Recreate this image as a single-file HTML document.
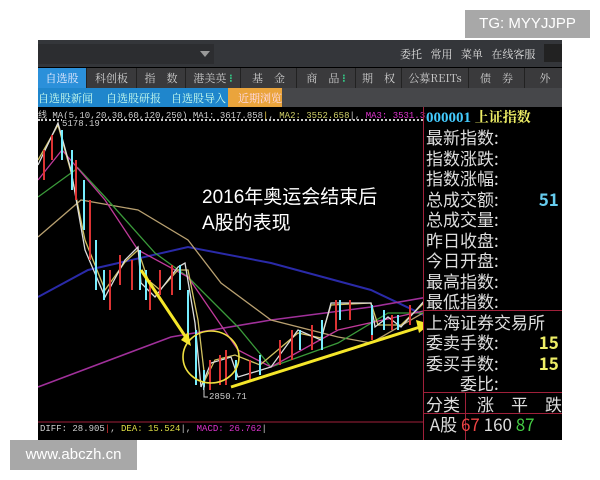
<!DOCTYPE html><html><head><meta charset="utf-8"><style>
body{margin:0;width:600px;height:480px;background:#fff;position:relative;overflow:hidden;font-family:"Liberation Sans","Noto Sans CJK SC",sans-serif}
.a{position:absolute}
.img{left:38px;top:40px;width:524px;height:400px;background:#000;overflow:hidden}
.top{left:0;top:0;width:524px;height:27px;background:#34363a}
.tabs{left:0;top:28px;width:524px;height:20px;background:#3a3a3c;font-size:11px;color:#ccc;font-family:"Noto Serif CJK SC",serif}
.tabs span{position:absolute;top:0;height:20px;line-height:20px;text-align:center;border-right:1px solid #222}
.sub{left:0;top:48px;width:524px;height:19px;background:#46474a;font-size:11px;color:#cfe;font-family:"Noto Serif CJK SC",serif}
.rp{font-family:"Noto Sans CJK SC",sans-serif;font-size:17px;color:#ddd;left:388px;line-height:20.5px}
</style></head><body>
<div class="a img">
<div class="a top"><div class="a" style="left:0;top:4px;width:176px;height:20px;background:#2c2d30"></div>
<div class="a" style="left:162px;top:11px;border:5px solid transparent;border-top:6px solid #999"></div>
<div class="a" style="left:362px;top:6px;font-size:11px;color:#ddd;font-family:'Noto Serif CJK SC',serif;white-space:nowrap">委托 &nbsp;&nbsp;常用 &nbsp;&nbsp;菜单 &nbsp;&nbsp;在线客服</div>
<div class="a" style="left:506px;top:4px;width:18px;height:18px;background:#222"></div></div>
<div class="a tabs">
<span style="left:0;width:48px;background:#2b90da;color:#eef">自选股</span>
<span style="left:49px;width:49px">科创板</span><span style="left:99px;width:48px">指　数</span>
<span style="left:148px;width:54px">港美英 <b style="color:#3c8">⁝</b></span><span style="left:203px;width:55px">基　金</span>
<span style="left:259px;width:58px">商　品 <b style="color:#3c8">⁝</b></span><span style="left:318px;width:45px">期　权</span>
<span style="left:364px;width:66px">公募REITs</span><span style="left:431px;width:55px">债　券</span><span style="left:487px;width:40px">外</span></div>
<div class="a sub"><div class="a" style="left:0;top:0;width:190px;height:19px;background:#1f86cc"></div>
<div class="a" style="left:190px;top:0;width:54px;height:19px;background:#eaa43c"></div>
<span class="a" style="left:0;top:2px">自选股新闻</span><span class="a" style="left:68px;top:2px">自选股研报</span><span class="a" style="left:133px;top:2px">自选股导入</span><span class="a" style="left:200px;top:2px;color:#fde">近期浏览</span></div>
<div class="a" style="left:0;top:68px;font-size:9px;font-family:'Liberation Mono',monospace;white-space:nowrap;color:#ccc">线 MA(5,10,20,30,60,120,250) MA1: 3617.858<span style="color:#ec4">|</span>, <span style="color:#cc6">MA2: 3552.658</span>|, <span style="color:#d3c">MA3: 3531.316</span>|, <span style="color:#3c3">MA4</span></div>
<div class="a" style="left:0;top:79px;width:385px;border-top:2px dotted #ccc"></div>
<div class="a" style="left:24px;top:79px;font-size:9px;color:#ccc;font-family:'Liberation Mono',monospace;background:#000">5178.19</div>
<svg class="a" style="left:0;top:0" width="386" height="400" viewBox="38 40 386 400">
<g fill="none" stroke-width="1.3">
<polyline stroke="#2a2aa8" stroke-width="2" points="38,297 88,270 188,247 271,263 371,290 428,317"/>
<polyline stroke="#a0309a" stroke-width="1.6" points="38,387 171,337 271,320 371,307 428,297"/>
<polyline stroke="#b8a070" points="38,237 81,200 138,210 188,240 221,283 271,320 338,337 371,343 428,310"/>
<polyline stroke="#3a9a3a" points="38,197 78,168 105,197 155,253 188,277 238,327 271,367 338,343 388,313 428,313"/>
<polyline stroke="#c03a9a" points="38,180 62,150 105,200 138,250 188,277 238,350 271,367 338,330 428,310"/>
<polyline stroke="#d0c060" points="38,160 58,125 71,172 85,240 105,290 125,262 138,250 148,280 160,290 178,270 188,270 198,320 205,380 215,360 235,355 260,365 298,333 321,338 331,305 371,303 378,325 401,325 425,302"/>
<polyline stroke="#ddd" points="38,165 58,123 71,170 85,250 105,297 125,260 138,247 141,283 155,297 178,267 185,263 195,323 201,387 211,363 231,357 238,377 271,367 298,330 321,340 331,303 371,303 375,327 388,317 401,327 425,300"/>
</g>
<g stroke-width="2">
<path stroke="#d33" d="M44 150v30M52 135v25M76 160v40M90 200v60M110 270v40M120 255v30M132 260v30M150 280v30M160 270v25M172 265v30M210 360v30M220 355v30M226 350v35M250 360v20M280 340v25M292 330v30M312 325v25M336 300v30M350 300v20M372 320v20M392 315v15M410 305v20"/>
<path stroke="#7ef" d="M62 130v30M72 150v40M84 180v50M96 240v50M104 270v30M140 250v40M146 270v30M180 265v25M188 290v50M196 330v55M204 370v20M236 360v20M260 355v20M300 330v20M322 320v30M340 300v20M372 305v30M384 310v20M398 315v15"/>
</g>
<polyline fill="none" stroke="#f5e629" stroke-width="3" points="141,270 185,336"/><polygon fill="#f5e629" points="181,340 191,346 188,332"/>
<polyline fill="none" stroke="#f5e629" stroke-width="3" points="231,387 420,327"/><polygon fill="#f5e629" points="416,320 430,324 419,333"/>
<ellipse cx="211" cy="357" rx="28" ry="26" fill="none" stroke="#f0e040" stroke-width="1.6"/>
<path stroke="#ccc" d="M204 385v12h4"/>
<line x1="38" y1="422" x2="424" y2="422" stroke="#a0203a"/>
</svg>
<div class="a" style="left:171px;top:352px;font-size:9px;color:#ccc;font-family:'Liberation Mono',monospace">2850.71</div>
<div class="a" style="left:164px;top:145px;font-size:19px;color:#fff;line-height:26px">2016年奥运会结束后<br>A股的表现</div>
<div class="a" style="left:2px;top:384px;font-size:9px;color:#ccc;font-family:'Liberation Mono',monospace">DIFF: 28.905<span style="color:#d33">|</span>, <span style="color:#dd4">DEA: 15.524</span>|, <span style="color:#d3c">MACD: 26.762</span>|</div>
<div class="a" style="left:385px;top:67px;width:1px;height:333px;background:#a0203a"></div>
<div class="a" style="left:385px;top:270px;width:139px;height:1px;background:#a0203a"></div>
<div class="a" style="left:385px;top:352px;width:139px;height:1px;background:#a0203a"></div>
<div class="a" style="left:385px;top:373px;width:139px;height:1px;background:#a0203a"></div>
<div class="a" style="left:427px;top:353px;width:1px;height:47px;background:#a0203a"></div>
<div class="a" style="left:388px;top:67px;font-size:15px;color:#4cf;font-weight:bold;font-family:'Liberation Serif',serif;background:#000">000001 <span style="color:#ee6;font-family:'Noto Serif CJK SC',serif;font-size:14px">上证指数</span></div>
<div class="a rp" style="top:87px">最新指数:<br>指数涨跌:<br>指数涨幅:<br>总成交额:<span style="color:#6ce;font-weight:bold;margin-left:40px">51</span><br>总成交量:<br>昨日收盘:<br>今日开盘:<br>最高指数:<br>最低指数:<br>上海证券交易所<br>委卖手数:<span style="color:#ee6;font-weight:bold;margin-left:40px">15</span><br>委买手数:<span style="color:#ee6;font-weight:bold;margin-left:40px">15</span><br>　　委比:<br>分类　涨　平　跌<br>&nbsp;A股 <span style="color:#e44">67</span> 160 <span style="color:#4c4">87</span></div>
</div>
<div class="a" style="left:465px;top:10px;width:125px;height:28px;background:#a8a8a8;color:#fff;font-size:15px;line-height:28px;text-align:center">TG: MYYJJPP</div>
<div class="a" style="left:10px;top:440px;width:127px;height:30px;background:#a8a8a8;color:#fff;font-size:15px;line-height:30px;text-align:center">www.abczh.cn</div>
</body></html>
